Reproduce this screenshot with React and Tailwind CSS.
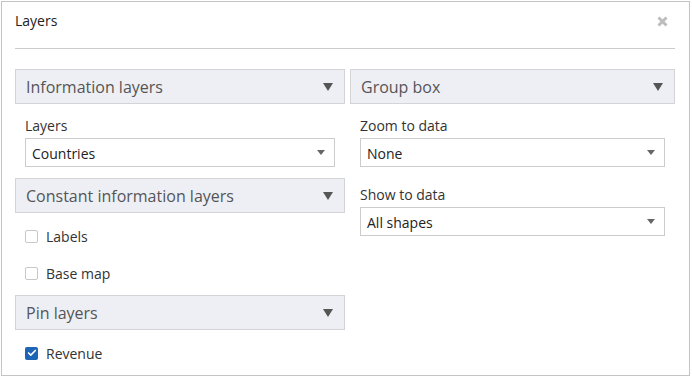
import { Check } from "lucide-react";

function GroupHeader({ title }) {
    return (
        <div className="h-[35px] flex items-center justify-between pl-[10px] pr-[11px] bg-[#eeeff5] border border-[#d4d4d8] text-[16px] text-[#555]">
            <span>{title}</span>
            <svg width="10" height="8" viewBox="0 0 10 8">
                <path d="M0 0 L10 0 L5 8 Z" fill="#555" />
            </svg>
        </div>
    );
}

function Select({ value }) {
    return (
        <div className="h-[29px] flex items-center justify-between pl-[6px] pr-[9px] bg-white border border-[#ccc] text-[14px] text-[#222]">
            <span className="pt-px">{value}</span>
            <svg width="8" height="5" viewBox="0 0 8 5">
                <path d="M0 0 L8 0 L4 5 Z" fill="#666" />
            </svg>
        </div>
    );
}

function Field({ label, value, className = "" }) {
    return (
        <div className={"px-[10px] " + className}>
            <div className="text-[14px] leading-[18px] text-[#333]">{label}</div>
            <div className="mt-[3px]">
                <Select value={value} />
            </div>
        </div>
    );
}

function CheckRow({ label, checked, className = "" }) {
    return (
        <div className={"h-[18px] flex items-center gap-[8px] pl-[10px] text-[14px] text-[#333] " + className}>
            {checked ? (
                <span className="size-[13px] rounded-[2px] bg-[#1f65b5] flex items-center justify-center">
                    <Check className="size-[10px] text-white" strokeWidth={4} />
                </span>
            ) : (
                <span className="size-[13px] rounded-[2px] border border-[#c8c8c8] bg-white" />
            )}
            <span>{label}</span>
        </div>
    );
}

export default function App() {
    return (
        <div className="w-[692px] h-[377px] bg-white pt-px pl-px" style={{ fontFamily: '"Open Sans", sans-serif' }}>
            <div className="w-[689px] h-[375px] border border-[#c4c4c4] pl-[13px] pr-[14px]">
                <div className="h-[47px] flex items-start justify-between pt-[10px] border-b border-[#ccc]">
                    <span className="text-[14px] leading-[18px] text-[#222]">Layers</span>
                    <svg width="11" height="11" viewBox="0 0 11 11" className="mt-[4px] mr-[7px]">
                        <path d="M1.5 1.5 L9.5 9.5 M9.5 1.5 L1.5 9.5" stroke="#bdbdbd" strokeWidth="3" />
                    </svg>
                </div>
                <div className="flex gap-[5px] pt-[20px]">
                    <div className="w-[330px] flex flex-col">
                        <GroupHeader title="Information layers" />
                        <Field label="Layers" value="Countries" className="mt-[13px]" />
                        <div className="mt-[11px]">
                            <GroupHeader title="Constant information layers" />
                        </div>
                        <CheckRow label="Labels" className="mt-[14px]" />
                        <CheckRow label="Base map" className="mt-[19px]" />
                        <div className="mt-[13px]">
                            <GroupHeader title="Pin layers" />
                        </div>
                        <CheckRow label="Revenue" checked className="mt-[14px]" />
                    </div>
                    <div className="w-[325px] flex flex-col">
                        <GroupHeader title="Group box" />
                        <Field label="Zoom to data" value="None" className="mt-[13px]" />
                        <Field label="Show to data" value="All shapes" className="mt-[19px]" />
                    </div>
                </div>
            </div>
        </div>
    );
}
